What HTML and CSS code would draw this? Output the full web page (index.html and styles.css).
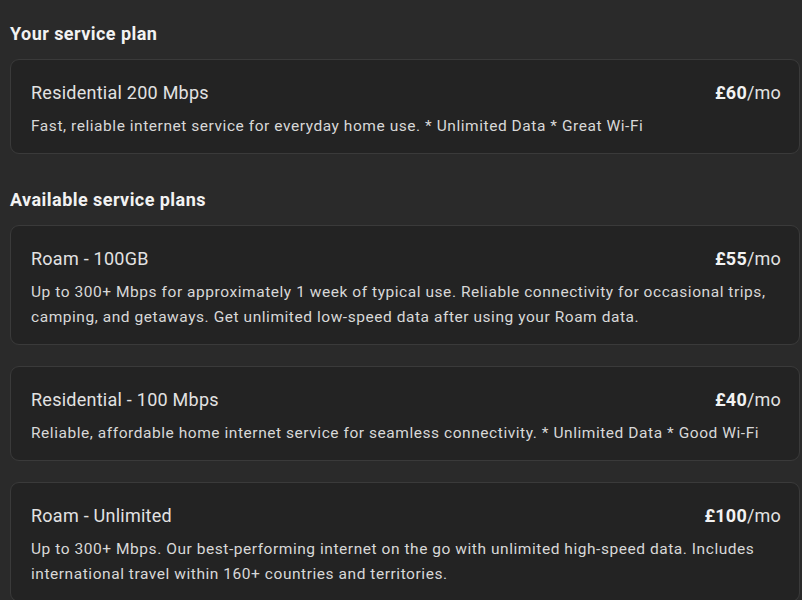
FILE: index.html
```html
<!DOCTYPE html>
<html>
<head>
<meta charset="utf-8">
<link rel="stylesheet" href="styles.css">
</head>
<body>
<main class="page">
  <section class="group">
    <h2 class="group-title">Your service plan</h2>
    <div class="plan-list">
      <div class="plan">
        <div class="plan-head">
          <span class="plan-name">Residential 200 Mbps</span>
          <span class="plan-price"><b>£60</b>/mo</span>
        </div>
        <p class="plan-desc">Fast, reliable internet service for everyday home use. * Unlimited Data * Great Wi-Fi</p>
      </div>
    </div>
  </section>
  <section class="group">
    <h2 class="group-title">Available service plans</h2>
    <div class="plan-list">
      <div class="plan">
        <div class="plan-head">
          <span class="plan-name">Roam - 100GB</span>
          <span class="plan-price"><b>£55</b>/mo</span>
        </div>
        <p class="plan-desc">Up to 300+ Mbps for approximately 1 week of typical use. Reliable connectivity for occasional trips, camping, and getaways. Get unlimited low-speed data after using your Roam data.</p>
      </div>
      <div class="plan">
        <div class="plan-head">
          <span class="plan-name">Residential - 100 Mbps</span>
          <span class="plan-price"><b>£40</b>/mo</span>
        </div>
        <p class="plan-desc">Reliable, affordable home internet service for seamless connectivity. * Unlimited Data * Good Wi-Fi</p>
      </div>
      <div class="plan">
        <div class="plan-head">
          <span class="plan-name">Roam - Unlimited</span>
          <span class="plan-price"><b>£100</b>/mo</span>
        </div>
        <p class="plan-desc">Up to 300+ Mbps. Our best-performing internet on the go with unlimited high-speed data. Includes international travel within 160+ countries and territories.</p>
      </div>
    </div>
  </section>
</main>
</body>
</html>
```
FILE: styles.css
```css
html, body {
  margin: 0;
  padding: 0;
  background: #2a2a2a;
}
body {
  font-family: Roboto, "Liberation Sans", sans-serif;
  color: #e4e4e4;
}
.page {
  padding: 22px 2px 0 10px;
  display: flex;
  flex-direction: column;
  gap: 34px;
}
.group {
  display: flex;
  flex-direction: column;
  gap: 13px;
}
.plan-list {
  display: flex;
  flex-direction: column;
  gap: 21px;
}
.group-title {
  margin: 0;
  font-size: 18px;
  font-weight: 700;
  letter-spacing: 0.45px;
  line-height: 24px;
  color: #f2f2f2;
}
.plan {
  background: #232323;
  border: 1px solid #3a3a3a;
  border-radius: 9px;
  padding: 20px 18px 14px 20px;
}
.plan-head {
  display: flex;
  justify-content: space-between;
  align-items: baseline;
  line-height: 26px;
}
.plan-name {
  font-size: 18px;
  font-weight: 400;
  letter-spacing: 0.25px;
  color: #e2e2e2;
}
.plan-price {
  font-size: 18px;
  color: #e2e2e2;
  letter-spacing: 0.2px;
}
.plan-price b {
  font-weight: 700;
  color: #f2f2f2;
}
.plan-desc {
  margin: 8px 0 0;
  font-size: 15.5px;
  letter-spacing: 0.55px;
  line-height: 25px;
  color: #d8d8d8;
}
```
